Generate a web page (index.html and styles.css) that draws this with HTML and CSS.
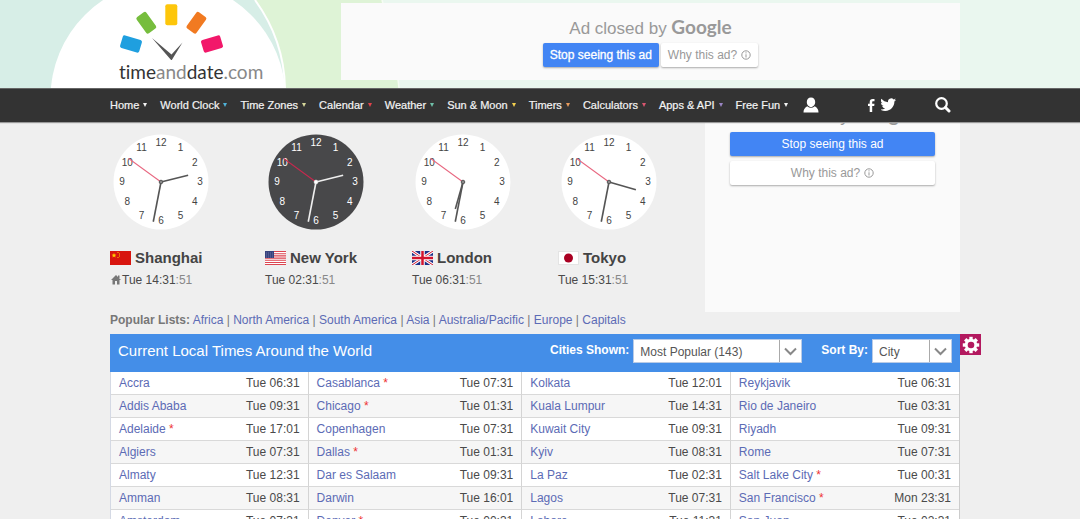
FILE: index.html
```html
<!DOCTYPE html>
<html lang="en">
<head>
<meta charset="utf-8">
<title>World Clock</title>
<link rel="stylesheet" href="styles.css">
</head>
<body>
<header class="banner">
  <svg class="banner-art" width="420" height="88" viewBox="0 0 420 88" aria-hidden="true">
    <path d="M0 0H382Q395 44 399 88H0Z" fill="#def3d6"/>
    <path d="M382 0Q395 44 399 88" fill="none" stroke="#f6fcf4" stroke-width="1.5"/>
    <path d="M0 0H255Q284 40 285 88H0Z" fill="#d7eee7"/>
    <path d="M255 0Q284 40 285 88" fill="none" stroke="#fff" stroke-width="2"/>
    <circle cx="168" cy="98" r="117.500" fill="#fff"/>
  </svg>
  <div class="wrap banner-row">
    <a class="logo" href="#">
      <svg width="104" height="56" viewBox="119 4 104 56" aria-hidden="true">
        <rect x="-10" y="-6.500" width="20" height="13" rx="2" fill="#1f9fdf" transform="translate(131 44) rotate(17)"/>
        <rect x="-6" y="-10" width="12" height="20" rx="2" fill="#76bd3d" transform="translate(146.300 22.800) rotate(-36)"/>
        <rect x="-6" y="-10.500" width="12" height="21" rx="2" fill="#fdc60b" transform="translate(171.300 14.800)"/>
        <rect x="-6" y="-10" width="12" height="20" rx="2" fill="#f17a21" transform="translate(196.400 22.800) rotate(36)"/>
        <rect x="-10" y="-6.500" width="20" height="13" rx="2" fill="#f2186a" transform="translate(212 44) rotate(-17)"/>
        <path d="M152 38L171.500 54.500L182.500 42.500L171.500 60.500Z" fill="#555"/>
      </svg>
      <span class="logo-text">time<span class="soft">and</span>date<span class="soft">.com</span></span>
    </a>
    <aside class="ad ad-top">
      <p class="ad-title">Ad closed by <span class="google">Google</span></p>
      <div class="ad-buttons">
        <button class="btn btn-stop">Stop seeing this ad</button>
        <button class="btn btn-why">Why this ad? <svg width="10" height="10" viewBox="0 0 10 10" aria-hidden="true"><circle cx="5" cy="5" r="4.200" fill="none" stroke="#999"/><path d="M5 4.300V7.500M5 2.300V3.400" stroke="#999"/></svg></button>
      </div>
    </aside>
  </div>
</header>
<nav class="nav">
  <div class="wrap nav-row">
    <ul class="menu">
      <li><a class="white" href="#">Home</a></li>
      <li><a class="blue" href="#">World Clock</a></li>
      <li><a class="cream" href="#">Time Zones</a></li>
      <li><a class="red" href="#">Calendar</a></li>
      <li><a class="teal" href="#">Weather</a></li>
      <li><a class="yellow" href="#">Sun &amp; Moon</a></li>
      <li><a class="orange" href="#">Timers</a></li>
      <li><a class="rose" href="#">Calculators</a></li>
      <li><a class="violet" href="#">Apps &amp; API</a></li>
      <li><a class="white" href="#">Free Fun</a></li>
    </ul>
    <div class="tools">
      <a class="user" href="#" aria-label="My Account"><svg width="16" height="16" viewBox="0 0 16 16"><path d="M8 .5C10.600 .5 12.200 2.400 12.200 5C12.200 7.600 10.300 10 8 10S3.800 7.600 3.800 5C3.800 2.400 5.400 .5 8 .5Z M.5 15.500C.5 12.500 1.500 11 4.200 9.200Q8 12.300 11.800 9.200C14.500 11 15.500 12.500 15.500 15.500Z" fill="#fff"/></svg></a>
      <a href="#" aria-label="Facebook"><svg width="7" height="13" viewBox="0 0 7 13"><path d="M1.700 13V7H0V4.700H1.700V3C1.700 1 2.800 0 4.700 0H6.500V2.200H5.200C4.400 2.200 4.200 2.600 4.200 3.200V4.700H6.500L6.200 7H4.200V13Z" fill="#fff"/></svg></a>
      <a class="twitter" href="#" aria-label="Twitter"><svg width="15" height="14" viewBox="1 3 23 19"><path d="M24 4.600a10 10 0 0 1-2.800.8 5 5 0 0 0 2.200-2.700c-1 .6-2 1-3.100 1.200a4.900 4.900 0 0 0-8.400 4.500C7.700 8.100 4.100 6.100 1.700 3.100a4.900 4.900 0 0 0 1.500 6.600c-.8 0-1.600-.2-2.200-.6a4.900 4.900 0 0 0 3.900 4.900c-.7.200-1.500.2-2.200.1a4.900 4.900 0 0 0 4.600 3.400A9.900 9.900 0 0 1 0 19.500 14 14 0 0 0 7.500 21.700c9.100 0 14.300-7.700 14-14.600A10 10 0 0 0 24 4.600z" fill="#fff"/></svg></a>
      <a class="search" href="#" aria-label="Search"><svg width="16" height="16" viewBox="0 0 16 16"><circle cx="6.500" cy="6.500" r="5.300" fill="none" stroke="#fff" stroke-width="2.200"/><path d="M10.500 10.500L14 14" stroke="#fff" stroke-width="3" stroke-linecap="round"/></svg></a>
    </div>
  </div>
</nav>
<main class="wrap">
  <div class="top">
    <div class="clocks" id="clocks"></div>
    <aside class="ad ad-side">
      <p class="ad-title">Ad closed by <span class="google">Google</span></p>
      <button class="btn btn-stop">Stop seeing this ad</button>
      <button class="btn btn-why">Why this ad? <svg width="10" height="10" viewBox="0 0 10 10" aria-hidden="true"><circle cx="5" cy="5" r="4.200" fill="none" stroke="#999"/><path d="M5 4.300V7.500M5 2.300V3.400" stroke="#999"/></svg></button>
    </aside>
  </div>
  <p class="lists"><b>Popular Lists:</b> <a href="#">Africa</a> | <a href="#">North America</a> | <a href="#">South America</a> | <a href="#">Asia</a> | <a href="#">Australia/Pacific</a> | <a href="#">Europe</a> | <a href="#">Capitals</a></p>
  <section class="board">
    <div class="board-head">
      <h1>Current Local Times Around the World</h1>
      <label for="shown">Cities Shown:</label>
      <span class="pick pick-wide"><select id="shown"><option>Most Popular (143)</option></select><svg width="22" height="22" viewBox="0 0 22 22"><path d="M.5 0V22" stroke="#aaa"/><path d="M6 8.500L11.500 14L17 8.500" fill="none" stroke="#888" stroke-width="2"/></svg></span>
      <label for="sort">Sort By:</label>
      <span class="pick"><select id="sort"><option>City</option></select><svg width="22" height="22" viewBox="0 0 22 22"><path d="M.5 0V22" stroke="#aaa"/><path d="M6 8.500L11.500 14L17 8.500" fill="none" stroke="#888" stroke-width="2"/></svg></span>
      <button class="gear" aria-label="Settings"><svg width="18" height="18" viewBox="-9 -9 18 18"><g fill="#fff"><rect x="-1.700" y="-8.200" width="3.400" height="16.400"/><rect x="-1.700" y="-8.200" width="3.400" height="16.400" transform="rotate(45)"/><rect x="-1.700" y="-8.200" width="3.400" height="16.400" transform="rotate(90)"/><rect x="-1.700" y="-8.200" width="3.400" height="16.400" transform="rotate(135)"/><circle r="6.200"/></g><circle r="3.300" fill="#b3195f"/></svg></button>
    </div>
    <table>
      <colgroup><col class="c1"><col class="t"><col class="c2"><col class="t"><col class="c3"><col class="t"><col class="c4"><col class="t"></colgroup>
      <tbody id="rows"></tbody>
    </table>
  </section>
</main>
<script src="script.js"></script>
</body>
</html>
```
FILE: styles.css
```css
* { box-sizing: border-box; }
body {
  margin: 0;
  height: 100vh;
  overflow: hidden;
  background: #efefef;
  color: #4a4a4a;
  font: 12px/16px "Liberation Sans", Arial, sans-serif;
}
a { color: #5c6bb5; text-decoration: none; }
p, h1, h2, ul { margin: 0; padding: 0; }
svg { display: block; }
button { font: inherit; cursor: pointer; }
.wrap { width: calc(100% - 230px); max-width: 1000px; margin-left: max(110px, calc(50% - 505px)); }

.banner { position: relative; height: 88px; overflow: hidden; background: #eaf7ef; }
.banner-art { position: absolute; left: 0; top: 0; }
.banner-row { position: relative; display: flex; justify-content: space-between; }
.logo { padding: 4px 0 0 9px; color: #333; }
.logo-text { display: block; font: 19px/24px Lato, sans-serif; font-variant-ligatures: none; white-space: nowrap; }
.soft { color: #888; }

.ad { background: #fafafa; color: #999; text-align: center; }
.ad-top { width: 619px; height: 77px; margin-top: 3px; padding-top: 13px; }
.ad-title { font-size: 17px; line-height: 22px; }
.google { font-family: Lato, sans-serif; font-weight: bold; font-size: 19px; }
.ad-buttons { display: flex; justify-content: center; gap: 2px; margin-top: 3px; }
.btn { display: flex; align-items: center; justify-content: center; gap: 4px; height: 24px; padding: 0 7px; border: 0; border-radius: 2px; box-shadow: 0 1px 2px #aaa; white-space: nowrap; }
.btn-stop { background: #4285f4; color: #fff; }
.ad-buttons .btn-stop { -webkit-text-stroke: 0.3px #fff; }
.btn-why { background: #fff; color: #999; }

.nav { position: relative; z-index: 2; height: 34px; background: #333; border-top: 1px solid #666; box-shadow: 0 1px 1px #999; }
.nav-row { display: flex; align-items: center; height: 32px; }
.menu { display: flex; gap: 12px; list-style: none; font-size: 11px; }
.menu a { display: flex; align-items: center; gap: 4px; color: #f4f4f4; white-space: nowrap; -webkit-text-stroke: 0.2px #f4f4f4; }
.menu a::after { content: ""; border: 2px solid transparent; border-top: 4px solid currentColor; border-bottom: 0; }
.menu li { padding-right: 1px; }
.menu .blue::after { border-top-color: #4fb3d9; }
.menu .cream::after { border-top-color: #d6d79b; }
.menu .red::after { border-top-color: #e0434b; }
.menu .teal::after { border-top-color: #6fc0a8; }
.menu .yellow::after { border-top-color: #f3d04e; }
.menu .orange::after { border-top-color: #e79a5b; }
.menu .rose::after { border-top-color: #d9566f; }
.menu .violet::after { border-top-color: #9a85c4; }
.tools { display: flex; flex: 1; align-items: center; margin-left: 14px; }
.user { margin-right: auto; }
.twitter { margin-left: 6px; }
.search { margin: 0 9px 0 39px; }

.top { display: flex; justify-content: space-between; height: 190px; }
.clocks { display: grid; grid-template-columns: 155px 147px 146px 147px; align-content: start; padding-top: 12px; }
.face { margin: 0 0 19px 3px; }
.face text { font-size: 10px; text-anchor: middle; }
.city { display: flex; align-items: center; gap: 4px; font-size: 15px; line-height: 18px; color: #444; }
.time { display: flex; align-items: center; margin-top: 5px; }
.time .sec { color: #888; }
.ad-side { width: 255px; height: 220px; margin-top: -30px; padding: 12px 25px 0; }
.ad-side .ad-title { margin-bottom: 4px; }
.ad-side .btn { width: 100%; margin-top: 5px; }
.ad-side .btn-stop { margin-top: 0; }

.lists { color: #777; }
.board { margin-top: 6px; }
.board-head { position: relative; display: flex; align-items: flex-start; height: 38px; padding: 5px 8px; background: #448ee8; color: #fff; }
.board-head h1 { flex: 1; font-size: 15px; font-weight: normal; line-height: 23px; }
.board-head label { font-weight: bold; line-height: 23px; margin-right: 4px; }
.pick { position: relative; width: 80px; }
.pick-wide { width: 169px; margin-right: 19px; }
.pick select { appearance: none; width: 100%; height: 24px; padding: 1px 28px 0 6px; border: 1px solid #b9cbe6; border-radius: 0; background: #fff; color: #555; font: inherit; }
.pick svg { position: absolute; right: 1px; top: 1px; pointer-events: none; }
.gear { position: absolute; left: 100%; top: 0; display: grid; place-items: center; width: 21px; height: 21px; padding: 0; border: 0; background: #b3195f; }

table { width: 100%; table-layout: fixed; border-collapse: separate; border-spacing: 0; border-left: 1px solid #d4d9e4; border-right: 1px solid #ccc; background: #fff; }
.c1 { width: 13.3%; }
.c2 { width: 15.2%; }
.c3 { width: 14.6%; }
.c4 { width: 16.9%; }
.t { width: 10%; }
td { height: 23px; padding: 0 8px; border-bottom: 1px solid #d9d9d9; line-height: 16px; white-space: nowrap; }
td:nth-child(even) { text-align: right; border-right: 1px solid #d4d4d4; }
td:last-child { border-right: 0; }
tr:nth-child(even) td { background: #f6f6f6; }
.dst { color: #e33; }
```
FILE: script.js
```js
const flags = {
  cn: '<rect width="21" height="14" fill="#d8150f"/><path d="M4 2l.7 1.600 1.700.1-1.300 1.100.4 1.700L4 5.600 2.500 6.500l.4-1.700L1.600 3.700l1.700-.1z" fill="#fc0"/><path d="M7.500 1.500h1M9 3h1M9 5h1M7.500 6.500h1" stroke="#fc0"/>',
  us: '<rect width="21" height="14" fill="#fff"/><path d="M0 .5H21M0 2.700H21M0 4.900H21M0 7.100H21M0 9.300H21M0 11.500H21M0 13.500H21" stroke="#dc4450" stroke-width="1.100"/><rect width="9" height="7" fill="#37427e"/><path d="M1 2H8M1 4H8M1 6H8" stroke="#8d95bd" stroke-width=".6" stroke-dasharray="1 1"/>',
  gb: '<rect width="21" height="14" fill="#1c2f87"/><path d="M0 0L21 14M21 0L0 14" stroke="#fff" stroke-width="3"/><path d="M0 0L21 14M21 0L0 14" stroke="#d2142e"/><path d="M10.500 0V14M0 7H21" stroke="#fff" stroke-width="4.500"/><path d="M10.500 0V14M0 7H21" stroke="#d2142e" stroke-width="2.500"/>',
  jp: '<rect x=".5" y=".5" width="20" height="13" fill="#fff" stroke="#e4e4e4"/><circle cx="10.500" cy="7" r="4.500" fill="#a90022"/>'
};
const home = '<svg width="12" height="10" viewBox="0 0 12 10"><path d="M6 0L11 5H9.500V9.500H7V6H5V9.500H2.500V5H1L6 0ZM8 .5H9.500V3H8Z" fill="#777"/></svg>';

function hand(angle, length, color, width) {
  return `<path d="M0 0V${-length}" transform="rotate(${angle})" stroke="${color}" stroke-width="${width}"/>`;
}
function clock(hour, dark) {
  const ink = dark ? '#eee' : '#555';
  let s = `<circle r="47.500" fill="${dark ? '#48484a' : '#fff'}"/>`;
  for (let i = 1; i <= 12; i++) {
    const a = i * Math.PI / 6;
    s += `<text x="${39 * Math.sin(a)}" y="${3 - 39 * Math.cos(a)}" fill="${dark ? '#fff' : '#444'}">${i}</text>`;
  }
  s += hand((hour % 12 + 31.85 / 60) * 30, 28, ink, 1.6);
  s += hand(191, 40.5, ink, 1.6);
  s += hand(306, 40, dark ? '#c8284e' : '#e8667f', 1);
  s += `<circle r="1.800" fill="${dark ? '#fff' : '#888'}" stroke="${ink}"/>`;
  return `<svg class="face" width="96" height="96" viewBox="-48 -48 96 96" aria-hidden="true">${s}</svg>`;
}
const places = [
  ['Shanghai', 'cn', '14', false, home],
  ['New York', 'us', '02', true, ''],
  ['London', 'gb', '06', false, ''],
  ['Tokyo', 'jp', '15', false, '']
];
document.getElementById('clocks').innerHTML = places.map(([name, flag, hour, dark, icon]) =>
  `<div>${clock(+hour, dark)}<h2 class="city"><svg width="21" height="14" viewBox="0 0 21 14" aria-hidden="true">${flags[flag]}</svg>${name}</h2><div class="time">${icon}<span>Tue ${hour}:31<span class="sec">:51</span></span></div></div>`
).join('');

const rows = [
  'Accra|Tue 06:31|Casablanca *|Tue 07:31|Kolkata|Tue 12:01|Reykjavik|Tue 06:31',
  'Addis Ababa|Tue 09:31|Chicago *|Tue 01:31|Kuala Lumpur|Tue 14:31|Rio de Janeiro|Tue 03:31',
  'Adelaide *|Tue 17:01|Copenhagen|Tue 07:31|Kuwait City|Tue 09:31|Riyadh|Tue 09:31',
  'Algiers|Tue 07:31|Dallas *|Tue 01:31|Kyiv|Tue 08:31|Rome|Tue 07:31',
  'Almaty|Tue 12:31|Dar es Salaam|Tue 09:31|La Paz|Tue 02:31|Salt Lake City *|Tue 00:31',
  'Amman|Tue 08:31|Darwin|Tue 16:01|Lagos|Tue 07:31|San Francisco *|Mon 23:31',
  'Amsterdam|Tue 07:31|Denver *|Tue 00:31|Lahore|Tue 11:31|San Juan|Tue 02:31'
];
document.getElementById('rows').innerHTML = rows.map(r => '<tr>' + r.split('|').map((v, i) => {
  if (i % 2) return `<td>${v}</td>`;
  const [name, star] = v.split(' *');
  return `<td><a href="#">${name}</a>${star === undefined ? '' : ' <span class="dst">*</span>'}</td>`;
}).join('') + '</tr>').join('');
```
